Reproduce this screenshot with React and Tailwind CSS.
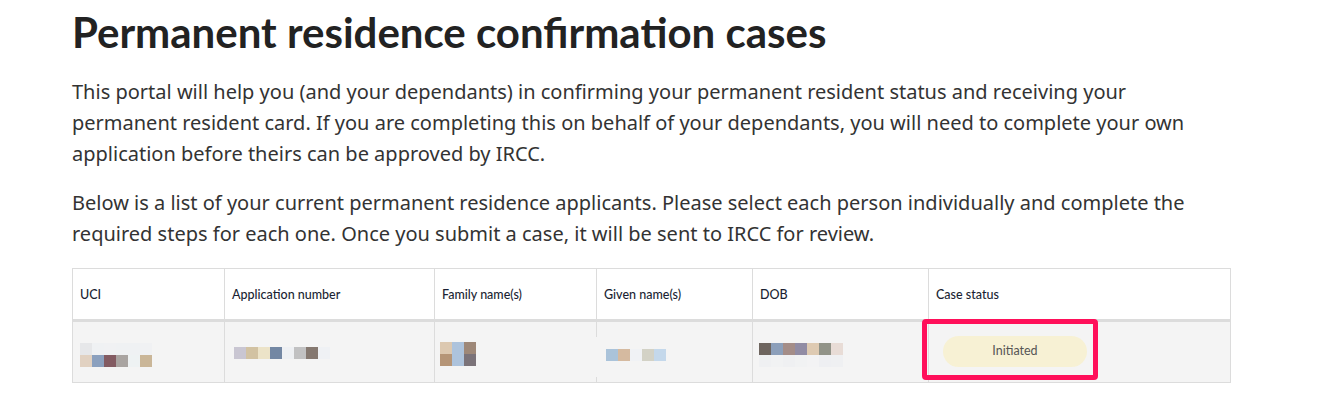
import React from "react";

const Sq = ({ c }) => <div className="w-[12px] h-[12px]" style={{ backgroundColor: c }} />;

const Row = ({ colors }) => (
  <div className="flex">
    {colors.map((c, i) => (
      <Sq key={i} c={c} />
    ))}
  </div>
);

export default function App() {
  return (
    <div className="bg-white w-[1325px] h-[406px] overflow-hidden">
      <div className="pl-[72px] pr-[94px]">
        <h1
          className="text-[42px] leading-[50px] font-bold text-[#222222] pt-[7px]"
          style={{ fontFamily: "Lato, sans-serif" }}
        >
          Permanent residence confirmation cases
        </h1>
        <div
          className="text-[20px] leading-[31px] text-[#333333] mt-[19px]"
          style={{ fontFamily: '"Noto Sans", sans-serif' }}
        >
          <p>
            This portal will help you (and your dependants) in confirming your permanent resident status and receiving your
            permanent resident card. If you are completing this on behalf of your dependants, you will need to complete your own
            application before theirs can be approved by IRCC.
          </p>
          <p className="mt-[18px]">
            Below is a list of your current permanent residence applicants. Please select each person individually and complete the
            required steps for each one. Once you submit a case, it will be sent to IRCC for review.
          </p>
        </div>
        <div
          className="mt-[19px] w-[1159px] border border-[#dcdcdc]"
          style={{ fontFamily: "Lato, sans-serif" }}
        >
          <div className="flex h-[53px] border-b-[3px] border-[#dcdcdc] text-[12.5px] font-medium text-[#1b1f33]">
            <div className="w-[152px] border-r border-[#dcdcdc] pl-[7px] pt-[2px] flex items-center">UCI</div>
            <div className="w-[210px] border-r border-[#dcdcdc] pl-[7px] pt-[2px] flex items-center">Application number</div>
            <div className="w-[162px] border-r border-[#dcdcdc] pl-[7px] pt-[2px] flex items-center">Family name(s)</div>
            <div className="w-[156px] border-r border-[#dcdcdc] pl-[7px] pt-[2px] flex items-center">Given name(s)</div>
            <div className="w-[176px] border-r border-[#dcdcdc] pl-[7px] pt-[2px] flex items-center">DOB</div>
            <div className="flex-1 pl-[7px] pt-[2px] flex items-center">Case status</div>
          </div>
          <div className="flex h-[60px] bg-[#f4f4f4]">
            <div className="w-[152px] border-r border-[#dcdcdc] pl-[7px] pt-[21px]">
              <Row colors={["#e6e7e9", "#eff1f3", "#f0f1f3", "#eff1f3", "#eff1f3", "#f0f1f3"]} />
              <Row colors={["#e1d1c1", "#8ba0be", "#835b62", "#a9a4a1", "#eef2f3", "#cab698"]} />
            </div>
            <div className="w-[210px] border-r border-[#dcdcdc] pl-[9px] pt-[25px]">
              <Row colors={["#c9c6d2", "#d2c2a2", "#ece3c8", "#7387a3", "#eef0f3", "#c1c1c2", "#857870", "#eff1f4"]} />
            </div>
            <div className="w-[162px] border-r border-[#dcdcdc] pl-[5px] pt-[20px]">
              <Row colors={["#dcc8b0", "#adc3dc", "#9e8878"]} />
              <Row colors={["#b59577", "#adc3dc", "#7b7379"]} />
            </div>
            <div className="w-[156px] border-r border-[#dcdcdc] pl-[9px] pt-[27px] relative">
              <div className="absolute left-[-1px] top-[15px] w-[1px] h-[40px] bg-[#f4f4f4]" />
              <Row colors={["#aac3da", "#d5baa0", "#f0f2f5", "#d3d2c6", "#c4d8eb"]} />
            </div>
            <div className="w-[176px] border-r border-[#dcdcdc] pl-[6px] pt-[21px]">
              <Row colors={["#6e655f", "#8c9fba", "#a48d88", "#918ca4", "#decab2", "#919388", "#e8dcd6"]} />
              <Row colors={["#eff0f2", "#f1f2f3", "#eff0f2", "#f1f2f3", "#f3f3f4", "#eeeff2", "#eff0f2"]} />
            </div>
            <div className="flex-1 relative">
              <div className="absolute left-[14px] top-[14px] w-[144px] h-[31px] rounded-full bg-[#f7f1d4] flex items-center justify-center text-[12.5px] text-[#555555]">
                Initiated
              </div>
              <div className="absolute left-[-7px] top-[-3px] w-[176px] h-[61px] border-[5px] border-[#ff0f5a] rounded-[4px]" />
            </div>
          </div>
        </div>
      </div>
    </div>
  );
}
